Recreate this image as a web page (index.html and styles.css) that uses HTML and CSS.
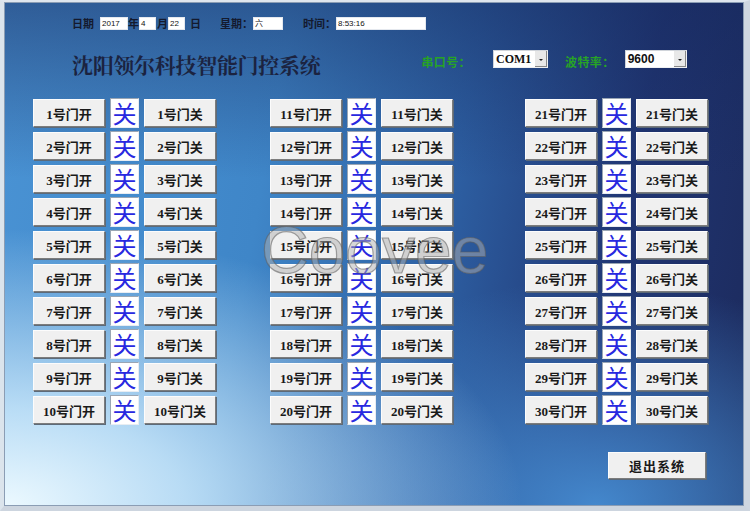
FILE: index.html
```html
<!DOCTYPE html>
<html lang="zh">
<head>
<meta charset="utf-8">
<title>沈阳领尔科技智能门控系统</title>
<link rel="stylesheet" href="styles.css">
</head>
<body>
<div class="frame">
  <div class="topbar">
    <span class="lbl">日期</span>
    <span class="field f-year">2017</span>
    <span class="lbl l-nian">年</span>
    <span class="field f-small">4</span>
    <span class="lbl l-yue">月</span>
    <span class="field f-small">22</span>
    <span class="lbl l-ri">日</span>
    <span class="lbl l-xq">星期：</span>
    <span class="field f-week">六</span>
    <span class="lbl l-sj">时间：</span>
    <span class="field f-time">8:53:16</span>
  </div>

  <div class="titlerow">
    <h1 class="title">沈阳领尔科技智能门控系统</h1>
    <span class="green g-port">串口号：</span>
    <div class="combo c-port"><span class="cv serif">COM1</span><span class="arrow"></span></div>
    <span class="green g-baud">波特率：</span>
    <div class="combo c-baud"><span class="cv sans">9600</span><span class="arrow"></span></div>
  </div>

  <div class="grid" id="grid">
    <div class="group g1"></div>
    <div class="group g2"></div>
    <div class="group g3"></div>
  </div>

  <div class="exitrow">
    <button class="btn exit">退出系统</button>
  </div>

  <div class="watermark">Coovee</div>
</div>
<script>
  var groups = document.querySelectorAll('.group');
  groups.forEach(function (g, gi) {
    for (var i = 1; i <= 10; i++) {
      var n = gi * 10 + i;
      var row = document.createElement('div');
      row.className = 'row';
      row.innerHTML = '<button class="btn door">' + n + '号门开</button>' +
        '<span class="state">关</span>' +
        '<button class="btn door">' + n + '号门关</button>';
      g.appendChild(row);
    }
  });
</script>
</body>
</html>
```
FILE: styles.css
```css
html, body {
  margin: 0;
  padding: 0;
}
body {
  width: 750px;
  height: 511px;
  overflow: hidden;
  font-family: "Noto Sans CJK SC", sans-serif;
}
.frame {
  position: relative;
  box-sizing: border-box;
  width: 750px;
  height: 511px;
  border-style: solid;
  border-width: 2px 6px 5px 4px;
  border-color: #dfe6ee #cfd7e1 #cdd5df #dbe4ec;
  box-shadow: inset 1px 1px 0 #8b9db4, inset -1px -1px 0 #8b9db4;
  background:
    radial-gradient(ellipse 70% 55% at 0% 100%, rgba(236,249,255,1) 0%, rgba(205,234,252,0.85) 35%, rgba(140,195,240,0) 100%),
    radial-gradient(ellipse 45% 45% at 80% 100%, rgba(72,145,215,0.9) 0%, rgba(72,145,215,0) 100%),
    linear-gradient(to bottom, rgba(22,40,92,0.5) 0%, rgba(22,40,92,0) 35%),
    linear-gradient(100deg, #4a93d4 0%, #3f86c8 35%, #2d5fa2 58%, #203572 80%, #1c2a5c 100%);
  overflow: hidden;
}

/* top bar */
.topbar {
  display: flex;
  align-items: center;
  height: 14px;
  margin-top: 14px;
  padding-left: 68px;
}
.lbl {
  font-size: 11px;
  font-weight: 700;
  color: #141a2e;
  line-height: 14px;
  white-space: nowrap;
}
.field {
  box-sizing: border-box;
  height: 13px;
  background: #fff;
  border: 1px solid #e4e8ee;
  font-family: "Liberation Sans", "Noto Sans CJK SC", sans-serif;
  font-size: 8px;
  line-height: 11px;
  color: #111;
  padding-left: 1px;
}
.f-year { width: 28px; margin-left: 6px; }
.f-small { width: 17px; }
.f-week { width: 30px; }
.f-time { width: 90px; }
.l-nian { margin-left: 0; }
.l-yue { margin-left: 1px; }
.l-ri { margin-left: 5px; }
.l-xq { margin-left: 19px; }
.l-sj { margin-left: 20px; }

/* title row */
.titlerow {
  display: flex;
  align-items: flex-start;
  height: 36px;
  margin-top: 16px;
  padding-left: 68px;
}
.title {
  margin: 0;
  font-size: 21px;
  letter-spacing: -0.3px;
  font-weight: 700;
  line-height: 36px;
  color: #1b2340;
  white-space: nowrap;
  font-family: "Noto Serif CJK SC", "Noto Sans CJK SC", serif;
}
.green {
  font-size: 12px;
  font-weight: 700;
  letter-spacing: 0.4px;
  color: #27a326;
  line-height: 19px;
  margin-top: 6px;
  white-space: nowrap;
}
.g-port { margin-left: 101px; }
.g-baud { margin-left: 17px; }
.combo {
  box-sizing: border-box;
  display: flex;
  align-items: stretch;
  height: 18px;
  margin-top: 4px;
  background: #fff;
  border: 1px solid #d0d4da;
  border-right-color: #eef0f3;
  border-bottom-color: #eef0f3;
}
.c-port { width: 55px; margin-left: 22px; }
.c-baud { width: 62px; margin-left: 10px; }
.cv {
  flex: 1;
  font-size: 12px;
  font-weight: 700;
  line-height: 16px;
  color: #111;
  padding-left: 2px;
}
.serif { font-family: "Liberation Serif", serif; }
.sans { font-family: "Liberation Sans", sans-serif; }
.arrow {
  position: relative;
  width: 12px;
  background: #e8e8e8;
  border-left: 1px solid #fff;
  box-shadow: inset -1px -1px 0 #888;
}
.arrow::after {
  content: "";
  position: absolute;
  left: 4px;
  top: 8px;
  border-left: 2px solid transparent;
  border-right: 2px solid transparent;
  border-top: 2px solid #222;
}

/* door grid */
.grid {
  display: flex;
  margin-top: 16px;
  padding-left: 29px;
}
.group {
  display: flex;
  flex-direction: column;
  gap: 3px;
}
.g2 { margin-left: 54px; }
.g3 { margin-left: 72px; }
.row {
  display: flex;
  align-items: center;
  height: 30px;
  gap: 5px;
}
.btn {
  box-sizing: border-box;
  margin: 0;
  padding: 0;
  background: #f0f0f0;
  border: 1px solid;
  border-color: #fcfcfc #7c7c7c #7c7c7c #fcfcfc;
  box-shadow: 1px 1px 0 #5d6a78;
  font-family: "Liberation Serif", "Noto Sans CJK SC", serif;
  font-weight: 700;
  color: #1a1a1a;
  white-space: nowrap;
}
.door {
  width: 72px;
  height: 28px;
  font-size: 13px;
}
.state {
  box-sizing: border-box;
  width: 29px;
  height: 30px;
  background: #fff;
  border: 1px solid;
  border-color: #9aa6b4 #e8edf2 #e8edf2 #9aa6b4;
  text-align: center;
  font-size: 24px;
  line-height: 27px;
  color: #2828e0;
  font-weight: 400;
}

/* exit */
.exitrow {
  display: flex;
  justify-content: flex-end;
  margin-top: 27px;
  padding-right: 38px;
}
.exit {
  width: 98px;
  height: 27px;
  font-size: 13px;
  font-family: "Noto Sans CJK SC", sans-serif;
  letter-spacing: 1px;
}

/* watermark overlay */
.watermark {
  position: absolute;
  left: 257px;
  top: 208px;
  font-family: "Liberation Sans", sans-serif;
  font-size: 66px;
  line-height: 80px;
  color: rgba(175,175,175,0.5);
  -webkit-text-stroke: 1.2px rgba(95,95,95,0.55);
  pointer-events: none;
}
```
